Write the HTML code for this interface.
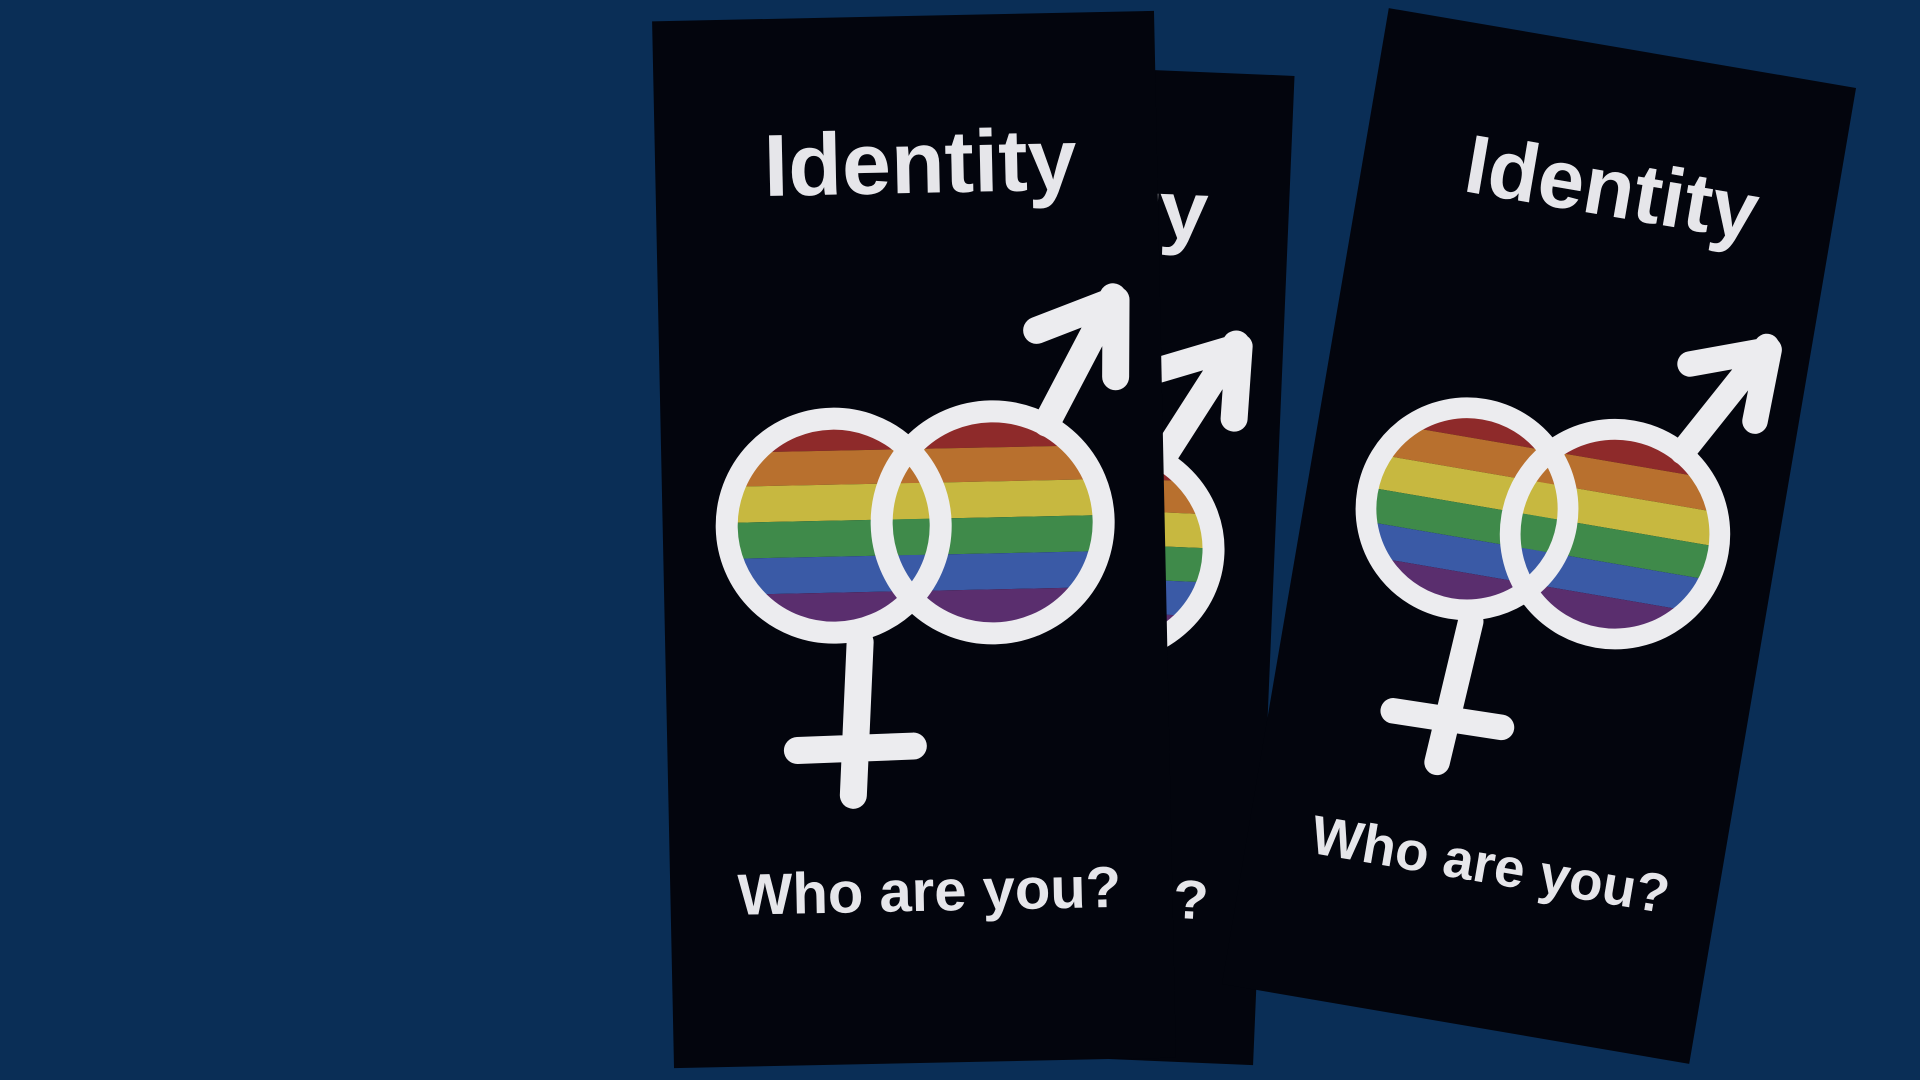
<!DOCTYPE html>
<html><head><meta charset="utf-8"><style>
html,body{margin:0;padding:0;width:1920px;height:1080px;overflow:hidden;background:#0a2e56;}
.card{position:absolute;background:#03050d;}
.card svg{position:absolute;left:0;top:0;width:100%;height:100%;}
</style></head><body>
<svg width="0" height="0" style="position:absolute">
<defs>
<clipPath id="cf"><circle cx="171" cy="508" r="97"/></clipPath>
<clipPath id="cm"><circle cx="330" cy="508" r="101"/></clipPath>
<g id="rb">
<rect x="0" y="395" width="520" height="38" fill="#8e2a2a"/>
<rect x="0" y="433" width="520" height="34" fill="#b8702e"/>
<rect x="0" y="467" width="520" height="36" fill="#c7b840"/>
<rect x="0" y="503" width="520" height="36" fill="#3f8a4a"/>
<rect x="0" y="539" width="520" height="36" fill="#3a5aa6"/>
<rect x="0" y="575" width="520" height="40" fill="#5a2e6e"/>
</g>
<g id="content">
<text x="265" y="177" text-anchor="middle" font-family="Liberation Sans, sans-serif" font-weight="bold" font-size="88" fill="#e6e6ea">Identity</text>
<g clip-path="url(#cf)"><use href="#rb"/></g>
<g clip-path="url(#cm)"><use href="#rb"/></g>
<g fill="none" stroke="#ececef" stroke-width="22" stroke-linecap="round" stroke-linejoin="round">
<circle cx="171" cy="508" r="107"/>
<circle cx="330" cy="508" r="111"/>
</g>
<g fill="none" stroke="#ececef" stroke-width="27" stroke-linecap="round" stroke-linejoin="round">
<path d="M386 410 L455 285 M378 317 L458 288 L456 365"/>
<path d="M195 625 L185 778 M130 732 L246 730"/>
</g>
<text x="259" y="895" text-anchor="middle" font-family="Liberation Sans, sans-serif" font-weight="bold" font-size="58" fill="#e6e6ea">Who are you?</text>
</g>
</defs>
</svg>

<div class="card" style="width:502px;height:990px;left:772px;top:65px;transform:rotate(2.4deg);">
<svg viewBox="0 0 502 1047" preserveAspectRatio="none"><use href="#content"/></svg></div>

<div class="card" style="width:502px;height:1047px;left:663px;top:16px;transform:rotate(-1.2deg);">
<svg viewBox="0 0 502 1047"><use href="#content"/></svg></div>

<div class="card" style="width:474px;height:990px;left:1302px;top:41px;transform:rotate(9.7deg);">
<svg viewBox="0 0 502 1047"><use href="#content"/></svg></div>
</body></html>
